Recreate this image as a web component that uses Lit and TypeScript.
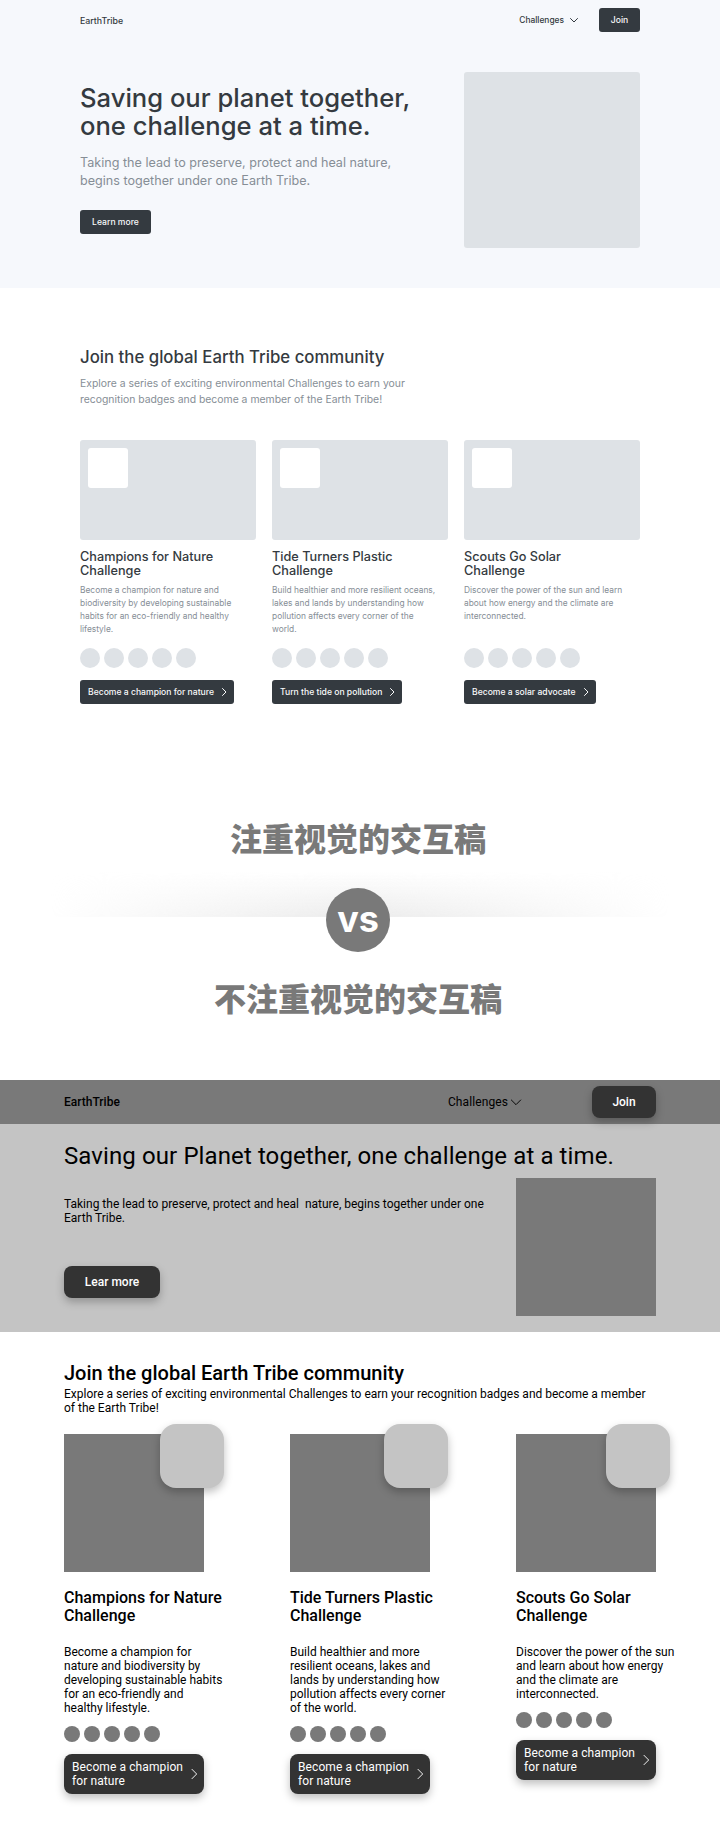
import { LitElement, html, css, svg } from "lit";
import { customElement } from "lit/decorators.js";

const right = (w: number) => svg`<path d="M4.5 2.5 8 6 4.5 9.5" fill="none" stroke="currentColor" stroke-width="${w}" stroke-linecap="round" stroke-linejoin="round"/>`;
const down = (w: number) => svg`<path d="M2.5 4.5 6 8 9.5 4.5" fill="none" stroke="currentColor" stroke-width="${w}" stroke-linecap="round" stroke-linejoin="round"/>`;

const topCards = [
  { t: "Champions for Nature Challenge", d: "Become a champion for nature and biodiversity by developing sustainable habits for an eco-friendly and healthy lifestyle.", b: "Become a champion for nature" },
  { t: "Tide Turners Plastic Challenge", d: "Build healthier and more resilient oceans, lakes and lands by understanding how pollution affects every corner of the world.", b: "Turn the tide on pollution" },
  { t: "Scouts Go Solar Challenge", d: "Discover the power of the sun and learn about how energy and the climate are interconnected.", b: "Become a solar advocate" },
];
const lowCards = [
  { t: "Champions for Nature Challenge", d: "Become a champion for nature and biodiversity by developing sustainable habits for an eco-friendly and healthy lifestyle.", left: 96 },
  { t: "Tide Turners Plastic Challenge", d: "Build healthier and more resilient oceans, lakes and lands by understanding how pollution affects every corner of the world.", left: 94 },
  { t: "Scouts Go Solar Challenge", d: "Discover the power of the sun and learn about how energy and the climate are interconnected.", left: 90 },
];
const five = [0, 1, 2, 3, 4];

@customElement("app-root")
export class AppRoot extends LitElement {
  static styles = css`
    :host { display: block; width: 720px; height: 1840px; background: #fff; overflow: hidden; font-family: Inter, "Noto Sans", sans-serif; }
    * { box-sizing: border-box; }
    h1, h2, h3, p { margin: 0; font-weight: inherit; }

    .a-top { background: #f6f8fc; height: 288px; padding: 0 80px; color: #343a40; }
    .a-nav { height: 40px; display: flex; align-items: center; font-size: 8.8px; font-weight: 500; }
    .a-logo { flex: 1; }
    .a-menu { display: flex; align-items: center; gap: 4px; margin-right: 19px; font-size: 8.4px; }
    .a-menu svg { width: 12px; height: 12px; }
    .a-btn { background: #343a40; color: #f8f9fa; border-radius: 3px; height: 24px; display: inline-flex; align-items: center; justify-content: center; font-size: 8.6px; font-weight: 500; }
    .a-join { width: 41px; }
    .a-hero { margin-top: 32px; display: flex; justify-content: space-between; }
    .a-copy { padding-top: 12px; }
    .a-copy h1 { font-size: 25.6px; line-height: 28px; font-weight: 500; }
    .a-copy p { margin-top: 14px; font-size: 12.6px; line-height: 18px; color: #868e96; }
    .a-learn { margin-top: 20px; width: 71px; }
    .a-img { width: 176px; height: 176px; background: #dee2e6; border-radius: 3px; }

    .a-main { padding: 59px 80px 0; color: #343a40; }
    .a-main h2 { font-size: 16.8px; line-height: 20px; font-weight: 500; }
    .a-sub { margin-top: 9px; width: 340px; font-size: 10.4px; line-height: 16px; color: #868e96; }
    .a-grid { margin-top: 32px; display: grid; grid-template-columns: repeat(3, 176px); column-gap: 16px; }
    .a-card { display: flex; flex-direction: column; align-items: flex-start; }
    .a-pic { width: 176px; height: 100px; padding: 8px; background: #dee2e6; border-radius: 3px; }
    .a-pic div { width: 40px; height: 40px; background: #fff; border-radius: 3px; }
    .a-card h3 { margin-top: 10px; font-size: 12.7px; line-height: 14px; font-weight: 500; width: 150px; }
    .a-card p { margin-top: 6px; flex: 1; width: 165px; font-size: 8.4px; line-height: 13px; color: #868e96; }
    .a-dots { margin-top: 12px; display: flex; gap: 4px; }
    .a-dots i { width: 20px; height: 20px; border-radius: 50%; background: #dee2e6; }
    .a-go { margin-top: 12px; padding: 0 4px 0 8px; gap: 4px; }
    .a-go svg { width: 12px; height: 12px; }

    .vs { margin-top: 117px; padding-right: 4px; text-align: center; color: #797979; font-family: "Noto Sans CJK SC", sans-serif; font-size: 32px; line-height: 32px; font-weight: 900; }
    .vs-row { position: relative; height: 64px; margin: 35px 0 29px; display: flex; justify-content: center; }
    .glow {
      position: absolute; left: 50px; right: 46px; top: -16px; height: 45px;
      background: linear-gradient(to top, #ececec, rgba(255, 255, 255, 0));
      -webkit-mask-image: linear-gradient(to right, transparent, rgba(0, 0, 0, 0.25) 12%, rgba(0, 0, 0, 0.65) 32%, #000 50%, rgba(0, 0, 0, 0.65) 68%, rgba(0, 0, 0, 0.25) 88%, transparent);
      mask-image: linear-gradient(to right, transparent, rgba(0, 0, 0, 0.25) 12%, rgba(0, 0, 0, 0.65) 32%, #000 50%, rgba(0, 0, 0, 0.65) 68%, rgba(0, 0, 0, 0.25) 88%, transparent);
    }
    .circle { position: relative; width: 64px; height: 64px; border-radius: 50%; background: #797979; color: #fff; display: flex; align-items: center; justify-content: center; font-family: Inter, sans-serif; font-size: 36px; font-weight: 700; line-height: 1; padding-bottom: 2px; }

    .b { font-family: Roboto, sans-serif; color: #000; margin-top: 67px; }
    .b-nav { height: 44px; background: #797979; padding: 0 64px; display: flex; align-items: center; font-size: 12px; }
    .b-logo { flex: 1; font-weight: 500; }
    .b-menu { display: flex; align-items: center; margin-right: 68px; letter-spacing: 0.1px; }
    .b-menu svg { width: 16px; height: 16px; }
    .b-btn { background: #333; color: #fff; border-radius: 8px; box-shadow: 0 4px 8px rgba(0, 0, 0, 0.25); font-weight: 500; font-size: 12px; height: 32px; display: flex; align-items: center; justify-content: center; }
    .b-join { width: 64px; }
    .b-hero { height: 208px; background: #c4c4c4; padding: 18px 64px 0; }
    .b-hero h1 { font-size: 24px; line-height: 28px; font-weight: 400; letter-spacing: 0.1px; }
    .b-row { margin-top: 8px; display: flex; justify-content: space-between; }
    .b-copy { width: 436px; padding-top: 19px; font-size: 12px; line-height: 14px; }
    .b-copy p { white-space: pre-wrap; }
    .b-learn { margin-top: 41px; width: 96px; }
    .b-img { width: 140px; height: 138px; background: #797979; }

    .b-main { padding: 29px 64px 0; }
    .b-main h2 { font-size: 20px; line-height: 24px; font-weight: 500; }
    .b-sub { margin-top: 2px; width: 592px; font-size: 12px; line-height: 14px; }
    .b-grid { margin-top: 19px; display: grid; grid-template-columns: repeat(3, 160px); column-gap: 66px; align-items: start; }
    .b-pic { position: relative; width: 140px; height: 138px; background: #797979; }
    .b-badge { position: absolute; top: -10px; width: 64px; height: 64px; background: #c4c4c4; border-radius: 16px; box-shadow: 0 4px 8px rgba(0, 0, 0, 0.25); }
    .b-card h3 { margin-top: 17px; font-size: 16px; line-height: 18px; font-weight: 500; }
    .b-card p { margin-top: 20px; font-size: 12px; line-height: 14px; }
    .b-dots { margin-top: 11px; display: flex; gap: 4px; }
    .b-dots i { width: 16px; height: 16px; border-radius: 50%; background: #797979; }
    .b-go { margin-top: 12px; width: 140px; height: 40px; padding: 0 2px 0 8px; justify-content: space-between; font-weight: 400; line-height: 14px; letter-spacing: 0.1px; }
    .b-go span { width: 114px; }
    .b-go svg { width: 16px; height: 16px; }
  `;

  render() {
    return html`
      <section class="a-top">
        <nav class="a-nav">
          <span class="a-logo">EarthTribe</span>
          <span class="a-menu">Challenges <svg viewBox="0 0 12 12">${down(1)}</svg></span>
          <span class="a-btn a-join">Join</span>
        </nav>
        <div class="a-hero">
          <div class="a-copy">
            <h1>Saving our planet together,<br />one challenge at a time.</h1>
            <p>Taking the lead to preserve, protect and heal nature,<br />begins together under one Earth Tribe.</p>
            <span class="a-btn a-learn">Learn more</span>
          </div>
          <div class="a-img"></div>
        </div>
      </section>

      <section class="a-main">
        <h2>Join the global Earth Tribe community</h2>
        <p class="a-sub">Explore a series of exciting environmental Challenges to earn your recognition badges and become a member of the Earth Tribe!</p>
        <div class="a-grid">
          ${topCards.map(c => html`
            <article class="a-card">
              <div class="a-pic"><div></div></div>
              <h3>${c.t}</h3>
              <p>${c.d}</p>
              <div class="a-dots">${five.map(() => html`<i></i>`)}</div>
              <span class="a-btn a-go">${c.b}<svg viewBox="0 0 12 12">${right(1)}</svg></span>
            </article>`)}
        </div>
      </section>

      <div class="vs">
        <div>注重视觉的交互稿</div>
        <div class="vs-row"><div class="glow"></div><div class="circle">vs</div></div>
        <div>不注重视觉的交互稿</div>
      </div>

      <div class="b">
        <nav class="b-nav">
          <span class="b-logo">EarthTribe</span>
          <span class="b-menu">Challenges<svg viewBox="0 0 12 12">${down(0.7)}</svg></span>
          <span class="b-btn b-join">Join</span>
        </nav>
        <section class="b-hero">
          <h1>Saving our Planet together, one challenge at a time.</h1>
          <div class="b-row">
            <div class="b-copy">
              <p>Taking the lead to preserve, protect and heal  nature, begins together under one Earth Tribe.</p>
              <span class="b-btn b-learn">Lear more</span>
            </div>
            <div class="b-img"></div>
          </div>
        </section>
        <section class="b-main">
          <h2>Join the global Earth Tribe community</h2>
          <p class="b-sub">Explore a series of exciting environmental Challenges to earn your recognition badges and become a member of the Earth Tribe!</p>
          <div class="b-grid">
            ${lowCards.map(c => html`
              <article class="b-card">
                <div class="b-pic"><div class="b-badge" style="left:${c.left}px"></div></div>
                <h3>${c.t}</h3>
                <p>${c.d}</p>
                <div class="b-dots">${five.map(() => html`<i></i>`)}</div>
                <div class="b-btn b-go"><span>Become a champion for nature</span><svg viewBox="0 0 12 12">${right(0.7)}</svg></div>
              </article>`)}
          </div>
        </section>
      </div>
    `;
  }
}
